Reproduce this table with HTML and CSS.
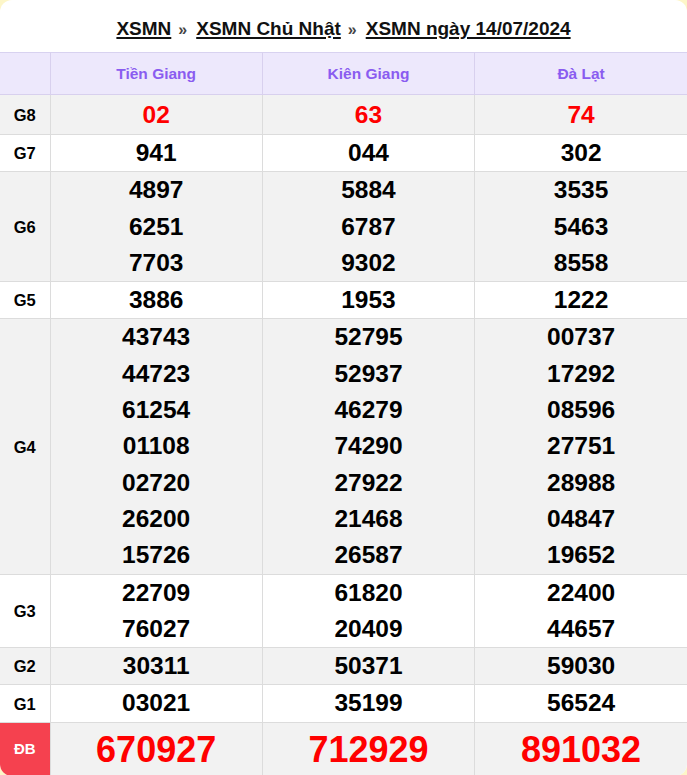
FILE: index.html
```html
<!DOCTYPE html>
<html lang="vi">
<head>
<meta charset="utf-8">
<title>XSMN ngày 14/07/2024</title>
<link rel="stylesheet" href="styles.css">
</head>
<body>
<div class="card">
  <h2 class="title">
    <a href="#">XSMN</a><span class="sep">»</span><a href="#">XSMN Chủ Nhật</a><span class="sep">»</span><a href="#">XSMN ngày 14/07/2024</a>
  </h2>
  <table class="kq">
    <colgroup><col class="c-label"><col><col><col></colgroup>
    <thead>
      <tr><th></th><th>Tiền Giang</th><th>Kiên Giang</th><th>Đà Lạt</th></tr>
    </thead>
    <tbody>
      <tr class="g8 alt"><td class="lbl">G8</td><td><div>02</div></td><td><div>63</div></td><td><div>74</div></td></tr>
      <tr><td class="lbl">G7</td><td><div>941</div></td><td><div>044</div></td><td><div>302</div></td></tr>
      <tr class="alt"><td class="lbl">G6</td>
        <td><div>4897</div><div>6251</div><div>7703</div></td>
        <td><div>5884</div><div>6787</div><div>9302</div></td>
        <td><div>3535</div><div>5463</div><div>8558</div></td></tr>
      <tr><td class="lbl">G5</td><td><div>3886</div></td><td><div>1953</div></td><td><div>1222</div></td></tr>
      <tr class="alt"><td class="lbl">G4</td>
        <td><div>43743</div><div>44723</div><div>61254</div><div>01108</div><div>02720</div><div>26200</div><div>15726</div></td>
        <td><div>52795</div><div>52937</div><div>46279</div><div>74290</div><div>27922</div><div>21468</div><div>26587</div></td>
        <td><div>00737</div><div>17292</div><div>08596</div><div>27751</div><div>28988</div><div>04847</div><div>19652</div></td></tr>
      <tr><td class="lbl">G3</td>
        <td><div>22709</div><div>76027</div></td>
        <td><div>61820</div><div>20409</div></td>
        <td><div>22400</div><div>44657</div></td></tr>
      <tr class="alt"><td class="lbl">G2</td><td><div>30311</div></td><td><div>50371</div></td><td><div>59030</div></td></tr>
      <tr><td class="lbl">G1</td><td><div>03021</div></td><td><div>35199</div></td><td><div>56524</div></td></tr>
      <tr class="db alt"><td class="lbl">ĐB</td><td><div>670927</div></td><td><div>712929</div></td><td><div>891032</div></td></tr>
    </tbody>
  </table>
</div>
</body>
</html>
```

FILE: styles.css
```css
html, body {
  margin: 0;
  padding: 0;
  background: #fdf6c8;
}
body {
  font-family: "Liberation Sans", Arial, Helvetica, sans-serif;
  color: #000;
}
.card {
  background: #fff;
  border-radius: 12px;
  overflow: hidden;
  min-height: 775px;
}
.title {
  margin: 0;
  height: 52px;
  box-sizing: border-box;
  padding-top: 17px;
  text-align: center;
  font-size: 19px;
  font-weight: bold;
  line-height: 24px;
}
.title a {
  color: #111;
  text-decoration: underline;
  text-underline-offset: 2px;
  text-decoration-thickness: 1.5px;
}
.title .sep {
  color: #444;
  margin: 0 9px 0 7px;
  font-size: 16px;
}
.kq {
  width: 100%;
  border-collapse: collapse;
  table-layout: fixed;
}
.c-label { width: 50px; }
.kq th {
  background: #ede8fc;
  color: #8a5cf0;
  font-size: 15.5px;
  font-weight: bold;
  height: 41px;
  padding: 0;
  border: 1px solid #d8d0ee;
  border-top-color: #d8d2f0;
}
.kq td {
  border: 1px solid #dcdcdc;
  padding: 0;
  text-align: center;
  vertical-align: middle;
  font-size: 24.5px;
  font-weight: bold;
  line-height: 36.3px;
}
.kq th:first-child, .kq td:first-child { border-left: none; }
.kq th:last-child, .kq td:last-child { border-right: none; }
.kq tr.alt td { background: #f2f2f2; }
.kq td.lbl {
  font-size: 16.5px;
  line-height: 20px;
}
.g8 td { color: #f00; line-height: 39px; }
.g8 td.lbl { color: #000; }
.db td {
  color: #f00;
  font-size: 36px;
  line-height: 53px;
  border-bottom: none;
}
.kq tr.db td.lbl {
  background: #f5414f;
  color: #fff;
  font-size: 15px;
}
```
